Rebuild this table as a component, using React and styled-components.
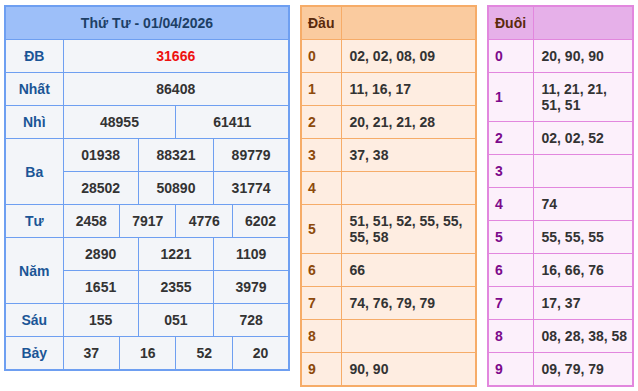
import React from "react";
import styled, { createGlobalStyle } from "styled-components";

const GlobalStyle = createGlobalStyle`
  body {
    margin: 0;
    background: #fff;
    font-family: "Liberation Sans", Arial, sans-serif;
  }
`;

const Page = styled.div`
  display: flex;
  align-items: flex-start;
  gap: 10px;
  padding: 5px 4px;
`;

const ResultTable = styled.table`
  width: 286px;
  table-layout: fixed;
  border-collapse: collapse;
  border: 2px solid #6e9ff1;
  font-size: 14px;
  font-weight: bold;
  background: #f3f5f9;
`;

const Title = styled.th`
  height: 32px;
  padding: 0;
  background: #9dbff9;
  color: #1d3f66;
  font-size: 14px;
  border-bottom: 1px solid #6e9ff1;
`;

const Label = styled.td`
  height: 32px;
  padding: 0;
  text-align: center;
  color: #1b5596;
  border: 1px solid #6e9ff1;
`;

const Num = styled.td`
  height: 32px;
  padding: 0;
  text-align: center;
  color: ${(p) => (p.$special ? "#ee1111" : "#333")};
  border: 1px solid #6e9ff1;
`;

const themes = {
  dau: {
    border: "#f6ac68",
    head: "#facb9f",
    body: "#feede1",
    key: "#8d4a0b",
    title: "#5a2a0c",
  },
  duoi: {
    border: "#e287de",
    head: "#e6b0e9",
    body: "#fcf0fb",
    key: "#7c0a8b",
    title: "#5a2a0c",
  },
};

const LotoTable = styled.table`
  width: ${(p) => p.$width}px;
  table-layout: fixed;
  border-collapse: collapse;
  border: 2px solid ${(p) => themes[p.$kind].border};
  background: ${(p) => themes[p.$kind].body};
  font-size: 14px;
  font-weight: bold;
`;

const LotoHead = styled.th`
  height: 32px;
  padding: 0 6px;
  text-align: left;
  background: ${(p) => themes[p.$kind].head};
  color: ${(p) => themes[p.$kind].title};
  border: 1px solid ${(p) => themes[p.$kind].border};
`;

const LotoKey = styled.td`
  padding: 8px 6px;
  line-height: 16px;
  color: ${(p) => themes[p.$kind].key};
  border: 1px solid ${(p) => themes[p.$kind].border};
`;

const LotoVal = styled.td`
  padding: 8px 4px 8px 8px;
  line-height: 16px;
  color: #333;
  border: 1px solid ${(p) => themes[p.$kind].border};
`;

const prizes = [
  { name: "ĐB", rows: [["31666"]], special: true },
  { name: "Nhất", rows: [["86408"]] },
  { name: "Nhì", rows: [["48955", "61411"]] },
  {
    name: "Ba",
    rows: [
      ["01938", "88321", "89779"],
      ["28502", "50890", "31774"],
    ],
  },
  { name: "Tư", rows: [["2458", "7917", "4776", "6202"]] },
  {
    name: "Năm",
    rows: [
      ["2890", "1221", "1109"],
      ["1651", "2355", "3979"],
    ],
  },
  { name: "Sáu", rows: [["155", "051", "728"]] },
  { name: "Bảy", rows: [["37", "16", "52", "20"]] },
];

const dau = [
  "02, 02, 08, 09",
  "11, 16, 17",
  "20, 21, 21, 28",
  "37, 38",
  "",
  "51, 51, 52, 55, 55, 55, 58",
  "66",
  "74, 76, 79, 79",
  "",
  "90, 90",
];

const duoi = [
  "20, 90, 90",
  "11, 21, 21, 51, 51",
  "02, 02, 52",
  "",
  "74",
  "55, 55, 55",
  "16, 66, 76",
  "17, 37",
  "08, 28, 38, 58",
  "09, 79, 79",
];

const Loto = ({ kind, title, width, keyWidth, data }) => (
  <LotoTable $kind={kind} $width={width}>
    <colgroup>
      <col style={{ width: keyWidth }} />
      <col />
    </colgroup>
    <thead>
      <tr>
        <LotoHead $kind={kind}>{title}</LotoHead>
        <LotoHead $kind={kind} />
      </tr>
    </thead>
    <tbody>
      {data.map((v, i) => (
        <tr key={i}>
          <LotoKey $kind={kind}>{i}</LotoKey>
          <LotoVal $kind={kind}>{v}</LotoVal>
        </tr>
      ))}
    </tbody>
  </LotoTable>
);

export default function App() {
  return (
    <>
      <GlobalStyle />
      <Page>
        <ResultTable>
          <colgroup>
            <col style={{ width: 58 }} />
            {Array.from({ length: 12 }).map((_, i) => (
              <col key={i} />
            ))}
          </colgroup>
          <thead>
            <tr>
              <Title colSpan={13}>Thứ Tư - 01/04/2026</Title>
            </tr>
          </thead>
          <tbody>
            {prizes.map((p) =>
              p.rows.map((row, r) => (
                <tr key={p.name + r}>
                  {r === 0 && <Label rowSpan={p.rows.length}>{p.name}</Label>}
                  {row.map((n, j) => (
                    <Num key={j} colSpan={12 / row.length} $special={p.special}>
                      {n}
                    </Num>
                  ))}
                </tr>
              ))
            )}
          </tbody>
        </ResultTable>
        <Loto kind="dau" title="Đầu" width={177} keyWidth={40} data={dau} />
        <Loto kind="duoi" title="Đuôi" width={147} keyWidth={45} data={duoi} />
      </Page>
    </>
  );
}
